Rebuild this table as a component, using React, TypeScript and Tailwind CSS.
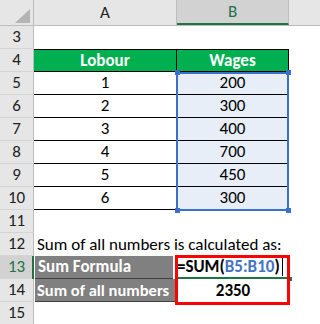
import React from "react";

const FONT = { fontFamily: "Carlito, Calibri, Lato, 'Liberation Sans', sans-serif" };

const data: [number, number, number][] = [
  [5, 1, 200],
  [6, 2, 300],
  [7, 3, 400],
  [8, 4, 700],
  [9, 5, 450],
  [10, 6, 300],
];

function RowNum({ n, active }: { n: number; active?: boolean }) {
  return (
    <div
      className={`flex w-[34px] shrink-0 items-center justify-center border-r border-b border-r-[#bdbdbd] border-b-[#d4d4d4] text-[17px] ${
        active ? "bg-[#d2d2d2] text-[#217346]" : "bg-[#e6e6e6] text-[#222]"
      }`}
    >
      {n}
    </div>
  );
}

export default function App() {
  return (
    <div className="relative h-[324px] w-[320px] overflow-hidden bg-white" style={FONT}>
      {/* column headers */}
      <div className="flex h-[26px] border-b border-[#bdbdbd] bg-[#e6e6e6] text-[17px]">
        <div className="relative w-[34px] shrink-0 border-r border-[#bdbdbd]">
          <svg className="absolute left-[15px] top-[9px]" width="15" height="14" viewBox="0 0 15 14">
            <polygon points="15,0 15,14 0,14" fill="#b4b4b4" />
          </svg>
        </div>
        <div className="flex w-[143px] shrink-0 items-center justify-center border-r border-[#bdbdbd] text-[#222]">A</div>
        <div className="flex w-[112px] shrink-0 items-center justify-center border-r border-b-2 border-r-[#bdbdbd] border-b-[#217346] bg-[#d2d2d2] text-[#217346]">
          B
        </div>
        <div className="flex-1" />
      </div>

      {/* row 3 */}
      <div className="flex h-[23px]">
        <RowNum n={3} />
      </div>

      {/* row 4 header */}
      <div className="flex h-[23px]">
        <RowNum n={4} />
        <div className="flex w-[143px] shrink-0 items-center justify-center border-y border-r border-black bg-[#00b050] text-[17px] font-bold text-white">
          Lobour
        </div>
        <div className="flex w-[112px] shrink-0 items-center justify-center border-y border-r border-black bg-[#00b050] text-[17px] font-bold text-white">
          Wages
        </div>
      </div>

      {data.map(([n, a, b]) => (
        <div key={n} className="flex h-[23px]">
          <RowNum n={n} />
          <div className="flex w-[143px] shrink-0 items-center justify-center border-r border-b border-black text-[17px] text-black">
            {a}
          </div>
          <div className="flex w-[112px] shrink-0 items-center justify-center border-r border-b border-black bg-[#e8eef8] text-[17px] text-black">
            {b}
          </div>
        </div>
      ))}

      {/* row 11 */}
      <div className="flex h-[23px]">
        <RowNum n={11} />
      </div>

      {/* row 12 */}
      <div className="flex h-[23px]">
        <RowNum n={12} />
        <div className="flex items-center whitespace-nowrap pl-[3px] text-[17px] text-black">
          Sum of all numbers is calculated as:
        </div>
      </div>

      {/* row 13 */}
      <div className="flex h-[23px]">
        <RowNum n={13} active />
        <div className="flex w-[143px] shrink-0 border-l-2 border-[#217346] -ml-[2px] pr-[2px]">
          <div className="ml-[1px] flex flex-1 items-center border-b border-[#404040] bg-[#808080] pl-[3px] text-[17px] font-bold text-white">
            Sum Formula
          </div>
        </div>
        <div className="flex w-[112px] shrink-0 items-center border-b-2 border-[#217346] pl-[2px] text-[17px] font-bold text-black">
          <span>=SUM(</span>
          <span className="text-[#4472c4]">B5:B10</span>
          <span>)</span>
          <span className="ml-[2px] h-[18px] w-px bg-black" />
        </div>
      </div>

      {/* row 14 */}
      <div className="flex h-[23px]">
        <RowNum n={14} />
        <div className="flex w-[143px] shrink-0 pr-[2px]">
          <div className="ml-[1px] flex flex-1 items-center whitespace-nowrap border-b border-[#404040] bg-[#808080] pl-[2px] text-[16.5px] font-bold text-white">
            Sum of all numbers
          </div>
        </div>
        <div className="flex w-[112px] shrink-0 items-center justify-center text-[17px] font-bold text-black">2350</div>
      </div>

      {/* row 15 */}
      <div className="flex h-[23px]">
        <RowNum n={15} />
      </div>

      {/* selection range B5:B10 */}
      <div className="pointer-events-none absolute left-[176px] top-[72px] h-[139px] w-[113px] border-2 border-[#3a6fcb]" />
      <div className="absolute left-[175px] top-[70px] h-[5px] w-[5px] bg-[#3a6fcb]" />
      <div className="absolute left-[286px] top-[70px] h-[5px] w-[5px] bg-[#3a6fcb]" />
      <div className="absolute left-[175px] top-[208px] h-[5px] w-[5px] bg-[#3a6fcb]" />
      <div className="absolute left-[286px] top-[208px] h-[5px] w-[5px] bg-[#3a6fcb]" />

      {/* active cell handle */}
      <div className="absolute left-[288px] top-[277px] h-[4px] w-[4px] bg-[#217346]" />

      {/* red highlight */}
      <div className="pointer-events-none absolute left-[175px] top-[255px] h-[50px] w-[115px] border-[3px] border-[#ff0000]" />
    </div>
  );
}
